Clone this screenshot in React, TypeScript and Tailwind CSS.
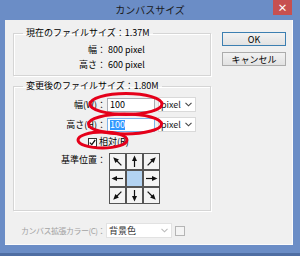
import React from "react";

const font = "font-['Noto_Sans_CJK_JP','Noto_Sans',sans-serif]";

function Chevron({ color = "#444" }: { color?: string }) {
  return (
    <svg width="7" height="5" viewBox="0 0 7 5">
      <path d="M0.5 0.8 L3.5 3.8 L6.5 0.8" fill="none" stroke={color} strokeWidth="1.1" />
    </svg>
  );
}

function Arrow({ angle }: { angle: number }) {
  // arrow drawn pointing up, rotated around the cell centre
  return (
    <svg width="15" height="15" viewBox="0 0 15 15">
      <g transform={`rotate(${angle} 7.5 7.5)`}>
        <line x1="7.5" y1="13" x2="7.5" y2="5" stroke="#111" strokeWidth="1.2" />
        <path d="M5 7 L7.5 1.5 L10 7 Z" fill="#111" />
      </g>
    </svg>
  );
}

function Select({ label, width, muted }: { label: string; width: string; muted?: boolean }) {
  return (
    <div
      className={`${width} h-[15px] bg-white border flex items-center justify-between pl-[2px] pr-[3px] ${
        muted ? "border-[#e2e2e2] text-[#333]" : "border-[#d9d9d9] text-[#222]"
      }`}
    >
      <span className="leading-none">{label}</span>
      <Chevron color={muted ? "#bbb" : "#444"} />
    </div>
  );
}

export default function App() {
  const arrows = [-45, 0, 45, -90, null, 90, -135, 180, 135];

  return (
    <div className={`${font} w-[300px] h-[256px] bg-[#6b8dc6] flex flex-col overflow-hidden relative text-[9px] text-black`}>
      {/* title bar */}
      <div className="h-[20px] flex items-start">
        <div className="flex-1 text-center pl-[27px] pt-[3px] text-[10px] text-[#1a1a1a] leading-[14px]">カンバスサイズ</div>
        <div className="w-[19px] h-[15px] bg-[#c75050] mr-[8px] flex items-center justify-center text-white text-[10px] font-bold leading-none">
          ×
        </div>
      </div>

      {/* body */}
      <div className="flex-1 flex pl-[5px] pr-[7px] pb-[8px] border-b-[3px] border-[#4f6ea3]">
        <div className="flex-1 bg-[#f0f0f0] border-r border-b border-[#fbfbfb] flex flex-col pl-[8px] pt-[7px]">
          <div className="flex">
            {/* left column */}
            <div className="w-[198px] flex flex-col">
              <fieldset className="h-[49px] border border-[#d5d5d5] shadow-[inset_1px_1px_0_#fff,1px_1px_0_#fff]">
                <legend className="ml-[9px] px-[3px] leading-[12px]">現在のファイルサイズ：1.37M</legend>
                <div className="flex h-[15px] items-center mt-[3px]">
                  <span className="w-[92px] text-right">幅：</span>
                  <span className="ml-[2px]">800 pixel</span>
                </div>
                <div className="flex h-[15px] items-center">
                  <span className="w-[92px] text-right">高さ：</span>
                  <span className="ml-[2px]">600 pixel</span>
                </div>
              </fieldset>

              <fieldset className="h-[131px] mt-[4px] border border-[#d5d5d5] shadow-[inset_1px_1px_0_#fff,1px_1px_0_#fff]">
                <legend className="ml-[9px] px-[3px] leading-[12px]">変更後のファイルサイズ：1.80M</legend>
                <div className="flex items-center mt-[5px] h-[15px]">
                  <span className="w-[92px] text-right">幅(W)：</span>
                  <div className="w-[48px] h-[14px] bg-white border border-[#abadb3] flex items-center pl-[2px] ml-[1px]">100</div>
                  <div className="ml-[3px]">
                    <Select label="pixel" width="w-[38px]" />
                  </div>
                </div>
                <div className="flex items-center mt-[5px] h-[15px]">
                  <span className="w-[92px] text-right">高さ(H)：</span>
                  <div className="w-[48px] h-[14px] bg-white border border-[#7eb4ea] flex items-center pl-[2px] ml-[1px]">
                    <span className="bg-[#3399ff] text-white leading-[10px]">100</span>
                  </div>
                  <div className="ml-[3px]">
                    <Select label="pixel" width="w-[38px]" />
                  </div>
                </div>
                <div className="flex items-center mt-[5px] h-[10px] ml-[74px]">
                  <div className="w-[9px] h-[9px] border border-[#333] bg-white flex items-center justify-center">
                    <svg width="7" height="7" viewBox="0 0 7 7">
                      <path d="M0.8 3.6 L2.8 5.6 L6.2 1" fill="none" stroke="#111" strokeWidth="1.3" />
                    </svg>
                  </div>
                  <span className="ml-[2px]">相対(R)</span>
                </div>
                <div className="flex items-start mt-[6px]">
                  <span className="w-[92px] text-right leading-[11px] mt-[1px]">基準位置：</span>
                  <div className="ml-[3px] grid grid-cols-3 w-[51px]">
                    {arrows.map((a, i) => (
                      <div
                        key={i}
                        className={`w-[17px] h-[17px] border border-[#555] flex items-center justify-center ${
                          a === null ? "bg-[#b3d3f2]" : "bg-[#f4f4f4]"
                        }`}
                      >
                        {a !== null && <Arrow angle={a} />}
                      </div>
                    ))}
                  </div>
                </div>
              </fieldset>
            </div>

            {/* right column */}
            <div className="ml-[11px] flex flex-col gap-[6px] pt-[5px]">
              <div className="w-[64px] h-[14px] border border-[#3c7fb1] bg-gradient-to-b from-[#f2f2f2] to-[#e2e2e2] flex items-center justify-center leading-none">
                OK
              </div>
              <div className="w-[64px] h-[14px] border border-[#acacac] bg-gradient-to-b from-[#f2f2f2] to-[#e2e2e2] flex items-center justify-center leading-none">
                キャンセル
              </div>
            </div>
          </div>

          {/* bottom row */}
          <div className="flex items-center mt-[12px] h-[15px]">
            <div className="w-[92px] flex justify-end whitespace-nowrap text-[#a3a3a3] text-[8px] tracking-[-0.5px]">
              <span>カンバス拡張カラー(C)：</span>
            </div>
            <div className="ml-[1px]">
              <Select label="背景色" width="w-[66px]" muted />
            </div>
            <div className="ml-[3px] w-[10px] h-[10px] border border-[#b5b5b5] bg-[#f4f4f4]" />
          </div>
        </div>
      </div>

      {/* red annotation ellipses */}
      <svg className="absolute inset-0 pointer-events-none" width="300" height="256">
        <ellipse cx="126" cy="104" rx="36" ry="10.5" fill="none" stroke="#e5001a" strokeWidth="3" />
        <ellipse cx="125" cy="124" rx="36.5" ry="10" fill="none" stroke="#e5001a" strokeWidth="3" />
        <ellipse cx="102.5" cy="140" rx="24.5" ry="8" fill="none" stroke="#e5001a" strokeWidth="3" />
      </svg>
    </div>
  );
}
